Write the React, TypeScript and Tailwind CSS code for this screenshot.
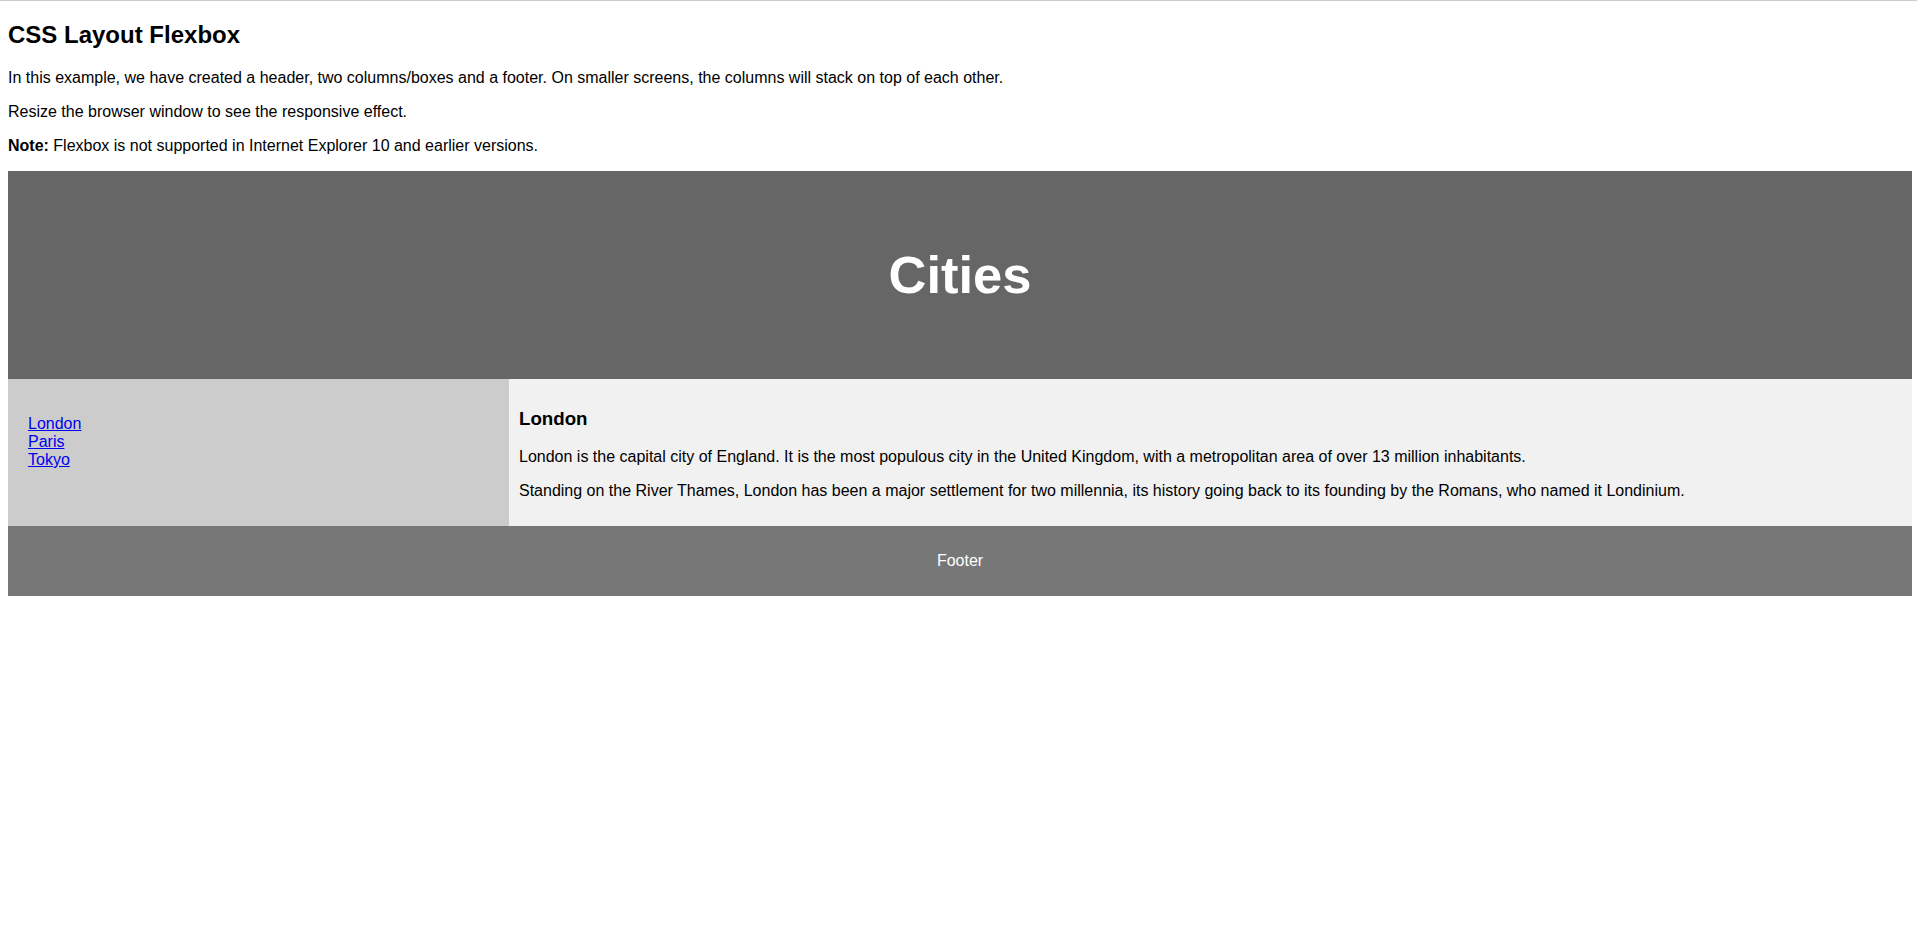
const cities = ['London', 'Paris', 'Tokyo']

export default function App() {
  return (
    <div className="min-h-screen bg-white border-t border-[#cccccc] text-black leading-[normal] font-['Liberation_Sans',Arial,Helvetica,sans-serif] text-[16px]">
      <div className="ml-[8px] mr-[5px]">
        <h2 className="text-[24px] font-bold my-[19.92px]">CSS Layout Flexbox</h2>
        <p className="my-4">
          In this example, we have created a header, two columns/boxes and a footer. On smaller screens, the columns will stack on top of each other.
        </p>
        <p className="my-4">Resize the browser window to see the responsive effect.</p>
        <p className="my-4">
          <strong className="font-bold">Note:</strong> Flexbox is not supported in Internet Explorer 10 and earlier versions.
        </p>

        <header className="bg-[#666666] p-[30px] text-center text-white">
          <h2 className="text-[52.5px] font-bold my-[43.575px]">Cities</h2>
        </header>

        <section className="flex">
          <nav className="flex-[1] bg-[#cccccc] p-5">
            <ul className="list-none p-0 my-4">
              {cities.map((c) => (
                <li key={c}>
                  <a href="#" className="text-[#0000ee] underline">{c}</a>
                </li>
              ))}
            </ul>
          </nav>
          <article className="flex-[3] bg-[#f1f1f1] p-[10px]">
            <h1 className="text-[18.72px] font-bold my-[18.72px]">London</h1>
            <p className="my-4">
              London is the capital city of England. It is the most populous city in the United Kingdom, with a metropolitan area of over 13 million inhabitants.
            </p>
            <p className="my-4">
              Standing on the River Thames, London has been a major settlement for two millennia, its history going back to its founding by the Romans, who named it Londinium.
            </p>
          </article>
        </section>

        <footer className="bg-[#777777] p-[10px] text-center text-white">
          <p className="my-4">Footer</p>
        </footer>
      </div>
    </div>
  )
}
